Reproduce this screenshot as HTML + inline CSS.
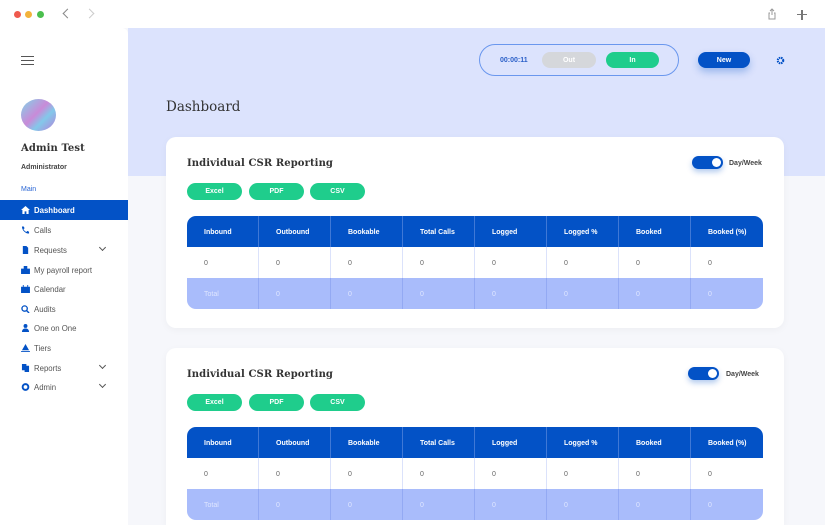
<!DOCTYPE html>
<html><head><meta charset="utf-8"><style>
*{margin:0;padding:0;box-sizing:border-box}
html,body{width:825px;height:525px;overflow:hidden}
body{background:#f6f7fb;font-family:"Liberation Sans",sans-serif;position:relative}
.abs{position:absolute}
.top{left:0;top:0;width:825px;height:28px;background:#fff}
.dot{width:7px;height:7px;border-radius:50%;top:11px}
.side{left:0;top:28px;width:128px;height:497px;background:#fff;border-top-right-radius:6px}
.hero{left:128px;top:28px;width:697px;height:148px;background:#dce3fd}
.item{left:0;width:128px;height:20px;font-size:7.8px;color:#555;line-height:21px;padding-left:34px}
.item.act{background:#0352c6;color:#fff;font-weight:bold}
.ic{position:absolute;left:21px;top:6px;width:9px;height:8px}
.chev{position:absolute;left:100px;top:5px;width:5px;height:5px;border-right:1.2px solid #555;border-bottom:1.2px solid #555;transform:rotate(45deg)}
.card{left:166px;width:618px;background:#fff;border-radius:10px;box-shadow:0 2px 8px rgba(0,0,0,.04)}
.title{font-family:"DejaVu Serif","Liberation Serif",serif;font-weight:bold;font-size:10px;color:#333;letter-spacing:.1px}
.btn{width:55px;height:17px;border-radius:9px;background:#1fcd8c;color:#fff;font-size:7px;font-weight:bold;display:flex;align-items:center;justify-content:center}
.tog{width:31px;height:13px;border-radius:7px;background:#0352c6;box-shadow:0 3px 6px rgba(3,82,198,.3)}
.tog::after{content:"";position:absolute;right:2px;top:2px;width:9px;height:9px;border-radius:50%;background:#fff}
.dw{font-size:7px;font-weight:bold;color:#444}
table{position:absolute;left:187px;width:576px;border-collapse:separate;border-spacing:0;border-radius:9px;overflow:hidden;font-size:7px}
td{width:72px;height:31px;padding-left:17px;padding-top:2px;border-right:1px solid #dbe2fb}
td:last-child{border-right:none}
tr.h td{background:#0352c6;color:#fff;font-weight:bold;border-right-color:#3f78d6}
tr.r td{background:#fff;color:#666}
tr.t td{background:#a9bcfb;color:#dfe6ff;border-right-color:#93a9f3}
</style></head><body>
<div class="abs top"></div>
<div class="abs dot" style="left:14px;background:#ef5a4e"></div>
<div class="abs dot" style="left:25px;background:#f3b33b"></div>
<div class="abs dot" style="left:37px;background:#4bbf4e"></div>
<div class="abs" style="left:64px;top:10px;width:7px;height:7px;border-left:1.3px solid #888;border-bottom:1.3px solid #888;transform:rotate(45deg)"></div>
<div class="abs" style="left:86px;top:10px;width:7px;height:7px;border-right:1.3px solid #ccc;border-top:1.3px solid #ccc;transform:rotate(45deg)"></div>
<svg class="abs" style="left:766px;top:8px" width="12" height="12" viewBox="0 0 12 12"><path d="M4 5H3v6h6V5H8M6 1v6M4 3l2-2 2 2" fill="none" stroke="#999" stroke-width="1"/></svg>
<div class="abs" style="left:797px;top:14px;width:10px;height:1.2px;background:#777"></div>
<div class="abs" style="left:801.4px;top:9.5px;width:1.2px;height:10px;background:#777"></div>

<div class="abs hero"></div>
<div class="abs side"></div>
<div class="abs" style="left:21px;top:56px;width:13px;height:1.2px;background:#555;box-shadow:0 4px 0 #555,0 8px 0 #555"></div>
<div class="abs" style="left:21px;top:99px;width:35px;height:32px;border-radius:50%;background:linear-gradient(135deg,#7fd6e8,#c98ad8 45%,#83c8ea 65%,#b77fd8)"></div>
<div class="abs title" style="left:21px;top:143px;font-size:10px">Admin Test</div>
<div class="abs" style="left:21px;top:164px;font-size:7px;font-weight:bold;color:#444">Administrator</div>
<div class="abs" style="left:21px;top:186px;font-size:7px;color:#2a66d4">Main</div>

<div class="abs item act" style="top:200px"><svg class="ic" viewBox="0 0 10 9"><path d="M5 0L0 4.5h1.5V9h2.5V6h2v3h2.5V4.5H10z" fill="#fff"/></svg>Dashboard</div>
<div class="abs item" style="top:220px"><svg class="ic" viewBox="0 0 10 9"><path d="M1 0.5l2 0 1 2-1.3 1c.8 1.6 1.8 2.6 3.3 3.3l1-1.3 2 1v2C5 8.5 1 5 1 .5z" fill="#0352c6"/></svg>Calls</div>
<div class="abs item" style="top:240px"><svg class="ic" viewBox="0 0 10 9"><path d="M2 0h4l2 2v7H2z" fill="#0352c6"/></svg>Requests<span class="chev"></span></div>
<div class="abs item" style="top:260px"><svg class="ic" viewBox="0 0 10 9"><path d="M0 3h10v6H0zM3 0h4v3H3z" fill="#0352c6"/></svg>My payroll report</div>
<div class="abs item" style="top:279px"><svg class="ic" viewBox="0 0 10 9"><path d="M0 2h10v7H0zM2 0h1v2H2zM7 0h1v2H7z" fill="#0352c6"/></svg>Calendar</div>
<div class="abs item" style="top:299px"><svg class="ic" viewBox="0 0 10 9"><circle cx="4" cy="4" r="3" fill="none" stroke="#0352c6" stroke-width="1.5"/><path d="M6 6l3 3" stroke="#0352c6" stroke-width="1.6"/></svg>Audits</div>
<div class="abs item" style="top:318px"><svg class="ic" viewBox="0 0 10 9"><circle cx="5" cy="2.2" r="2.2" fill="#0352c6"/><path d="M1 9c0-3 2-4 4-4s4 1 4 4z" fill="#0352c6"/></svg>One on One</div>
<div class="abs item" style="top:338px"><svg class="ic" viewBox="0 0 10 9"><path d="M5 0L1 7h8zM0 8h10v1H0z" fill="#0352c6"/></svg>Tiers</div>
<div class="abs item" style="top:358px"><svg class="ic" viewBox="0 0 10 9"><path d="M1 0h5v7H1zM4 2h5v7H4z" fill="#0352c6"/></svg>Reports<span class="chev"></span></div>
<div class="abs item" style="top:377px"><svg class="ic" viewBox="0 0 10 9"><circle cx="5" cy="4.5" r="3.2" fill="none" stroke="#0352c6" stroke-width="2.2"/></svg>Admin<span class="chev"></span></div>

<div class="abs" style="left:479px;top:44px;width:200px;height:32px;border:1px solid #6a97ee;border-radius:16px"></div>
<div class="abs" style="left:500px;top:57px;font-size:7px;font-weight:bold;color:#2a5fc8">00:00:11</div>
<div class="abs btn" style="left:542px;top:52px;background:#d5d7db;width:54px;height:16px">Out</div>
<div class="abs btn" style="left:606px;top:52px;width:53px;height:16px">In</div>
<div class="abs btn" style="left:698px;top:52px;width:52px;height:16px;background:#0352c6;box-shadow:0 4px 8px rgba(3,82,198,.3)">New</div>
<svg class="abs" style="left:776px;top:56px" width="9" height="9" viewBox="0 0 10 10"><circle cx="5" cy="5" r="3" fill="none" stroke="#0352c6" stroke-width="2.4" stroke-dasharray="1.6 0.8"/></svg>
<div class="abs" style="left:166px;top:99px;font-family:'DejaVu Serif','Liberation Serif',serif;font-size:13.5px;color:#333">Dashboard</div>

<div class="abs card" style="top:137px;height:191px"></div>
<div class="abs title" style="left:187px;top:158px">Individual CSR Reporting</div>
<div class="abs tog" style="left:692px;top:156px"></div>
<div class="abs dw" style="left:729px;top:160px">Day/Week</div>
<div class="abs btn" style="left:187px;top:183px">Excel</div>
<div class="abs btn" style="left:249px;top:183px">PDF</div>
<div class="abs btn" style="left:310px;top:183px">CSV</div>
<table style="top:216px">
<tr class="h"><td>Inbound</td><td>Outbound</td><td>Bookable</td><td>Total Calls</td><td>Logged</td><td>Logged %</td><td>Booked</td><td>Booked (%)</td></tr>
<tr class="r"><td>0</td><td>0</td><td>0</td><td>0</td><td>0</td><td>0</td><td>0</td><td>0</td></tr>
<tr class="t"><td>Total</td><td>0</td><td>0</td><td>0</td><td>0</td><td>0</td><td>0</td><td>0</td></tr>
</table>

<div class="abs card" style="top:348px;height:177px;border-bottom-left-radius:0;border-bottom-right-radius:0"></div>
<div class="abs title" style="left:187px;top:369px">Individual CSR Reporting</div>
<div class="abs tog" style="left:688px;top:367px"></div>
<div class="abs dw" style="left:726px;top:371px">Day/Week</div>
<div class="abs btn" style="left:187px;top:394px">Excel</div>
<div class="abs btn" style="left:249px;top:394px">PDF</div>
<div class="abs btn" style="left:310px;top:394px">CSV</div>
<table style="top:427px">
<tr class="h"><td>Inbound</td><td>Outbound</td><td>Bookable</td><td>Total Calls</td><td>Logged</td><td>Logged %</td><td>Booked</td><td>Booked (%)</td></tr>
<tr class="r"><td>0</td><td>0</td><td>0</td><td>0</td><td>0</td><td>0</td><td>0</td><td>0</td></tr>
<tr class="t"><td>Total</td><td>0</td><td>0</td><td>0</td><td>0</td><td>0</td><td>0</td><td>0</td></tr>
</table>
</body></html>
